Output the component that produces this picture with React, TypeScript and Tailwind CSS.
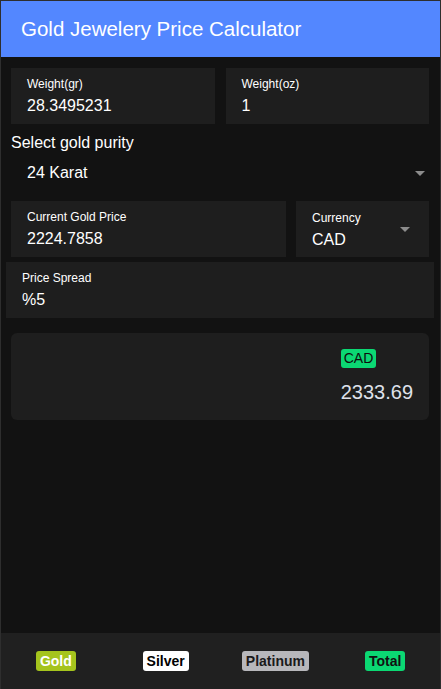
import React from "react";

const Caret = () => (
  <svg width="10" height="5" viewBox="0 0 10 5" className="shrink-0">
    <path d="M0 0 L10 0 L5 5 Z" fill="#8c8c8c" />
  </svg>
);

function Field({ label, value, className = "" }: { label: string; value: string; className?: string }) {
  return (
    <div className={`bg-[#1e1e1e] h-[56px] pl-4 pt-[9px] ${className}`}>
      <div className="text-[12px] leading-[14px] text-white">{label}</div>
      <div className="text-[16px] leading-[20px] mt-[5px] text-white">{value}</div>
    </div>
  );
}

export default function App() {
  const tabs = [
    { name: "Gold", cls: "bg-[#a5c41d] text-white" },
    { name: "Silver", cls: "bg-white text-black" },
    { name: "Platinum", cls: "bg-[#b7b7bb] text-[#1a1a1a]" },
    { name: "Total", cls: "bg-[#0bd873] text-[#111]" },
  ];

  return (
    <div
      className="w-[441px] h-[689px] flex flex-col bg-[#121212] border border-b-0 border-[#2e2e2e] overflow-hidden"
      style={{ fontFamily: '"Liberation Sans", Arial, sans-serif' }}
    >
      <header className="h-[56px] shrink-0 bg-[#5387ff] flex items-center px-5 text-white text-[20.5px]">
        Gold Jewelery Price Calculator
      </header>

      <main className="flex-1 flex flex-col pt-[11px]">
        <div className="flex gap-[11px] pl-[10px] pr-[11px]">
          <Field label="Weight(gr)" value="28.3495231" className="flex-1" />
          <Field label="Weight(oz)" value="1" className="flex-1" />
        </div>

        <div className="px-[10px] mt-[10px] text-white text-[16px] leading-[18px]">Select gold purity</div>
        <div className="flex items-center justify-between pl-[26px] pr-[15px] h-[24px] mt-[9px] text-white text-[16px]">
          <span>24 Karat</span>
          <Caret />
        </div>

        <div className="flex gap-[10px] pl-[10px] pr-[11px] mt-[16px]">
          <Field label="Current Gold Price" value="2224.7858" className="flex-1" />
          <div className="bg-[#1e1e1e] h-[56px] w-[133px] pl-4 pr-[19px] pt-[10px] flex items-start justify-between">
            <div>
              <div className="text-[12px] leading-[14px] text-white">Currency</div>
              <div className="text-[16px] leading-[20px] mt-[5px] text-white">CAD</div>
            </div>
            <div className="mt-[16px]">
              <Caret />
            </div>
          </div>
        </div>

        <div className="ml-[5px] mr-[6px] mt-[5px]">
          <Field label="Price Spread" value="%5" />
        </div>

        <div className="ml-[10px] mr-[11px] mt-[15px] h-[87px] bg-[#1e1e1e] rounded-md flex justify-end pr-[16px] pt-[16px]">
          <div className="flex flex-col items-start">
            <span className="bg-[#0bd873] text-[#0d0d0d] text-[14px] leading-[19px] px-[3px] rounded-[3px]">CAD</span>
            <span className="text-[#dfe1ea] text-[20px] leading-[24px] mt-[12px]">2333.69</span>
          </div>
        </div>
      </main>

      <nav className="h-[56px] shrink-0 bg-[#202020] grid grid-cols-4 items-center">
        {tabs.map((t) => (
          <div key={t.name} className="flex justify-center">
            <span className={`text-[14px] font-bold leading-[20px] px-[4px] rounded-[3px] ${t.cls}`}>{t.name}</span>
          </div>
        ))}
      </nav>
    </div>
  );
}
